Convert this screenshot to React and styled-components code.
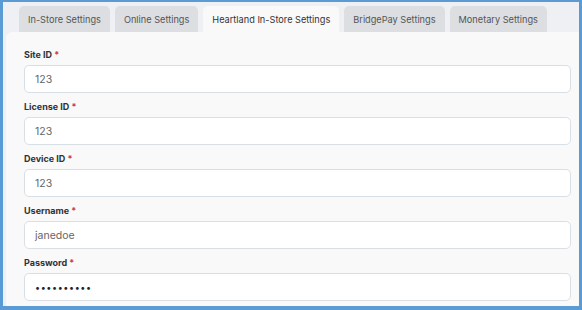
import styled, { createGlobalStyle } from "styled-components";

const GlobalStyle = createGlobalStyle`
  html, body {
    margin: 0;
    padding: 0;
    background: #ffffff;
  }
  * {
    box-sizing: border-box;
  }
`;

const tabs = [
  "In-Store Settings",
  "Online Settings",
  "Heartland In-Store Settings",
  "BridgePay Settings",
  "Monetary Settings",
];

const fields = [
  { label: "Site ID", value: "123" },
  { label: "License ID", value: "123" },
  { label: "Device ID", value: "123" },
  { label: "Username", value: "janedoe" },
  { label: "Password", value: "••••••••••", secret: true },
];

export default function App() {
  return (
    <>
      <GlobalStyle />
      <Frame>
        <TabBar>
          {tabs.map((t, i) => (
            <Tab key={t} $active={i === 2}>
              {t}
            </Tab>
          ))}
        </TabBar>
        <Card>
          {fields.map((f) => (
            <Field key={f.label}>
              <Label>
                {f.label} <Req>*</Req>
              </Label>
              <Input $secret={f.secret}>{f.value}</Input>
            </Field>
          ))}
          <Field>
            <Radio />
          </Field>
        </Card>
      </Frame>
    </>
  );
}

const Frame = styled.div`
  width: 582px;
  height: 310px;
  border: solid #5b9bd5;
  border-width: 2px 3px 4px 3px;
  background: #eef0f3;
  overflow: hidden;
  display: flex;
  flex-direction: column;
  font-family: Inter, "Noto Sans", sans-serif;
`;

const TabBar = styled.div`
  display: flex;
  gap: 5px;
  padding: 4px 0 0 16px;
`;

const Tab = styled.div`
  height: 26px;
  padding: 0 9px;
  display: flex;
  align-items: center;
  font-size: 9.2px;
  color: ${(p) => (p.$active ? "#333" : "#555")};
  background: ${(p) => (p.$active ? "#f9f9fa" : "#dcdee1")};
  border-radius: 5px 5px 0 0;
  white-space: nowrap;
`;

const Card = styled.div`
  flex: 1;
  margin-left: 3px;
  background: #f9f9fa;
  border-radius: 6px 0 0 0;
  padding: 18px 8px 0 18px;
  display: flex;
  flex-direction: column;
  gap: 9px;
`;

const Field = styled.div`
  display: flex;
  flex-direction: column;
  gap: 5px;
`;

const Label = styled.div`
  font-size: 9px;
  font-weight: 700;
  color: #2f3337;
  line-height: 10px;
`;

const Req = styled.span`
  color: #d03b3b;
`;

const Input = styled.div`
  height: 28px;
  background: #fff;
  border: 1px solid #d8e0e6;
  border-radius: 5px;
  padding: 0 10px;
  display: flex;
  align-items: center;
  font-size: ${(p) => (p.$secret ? "9px" : "10.5px")};
  color: ${(p) => (p.$secret ? "#222" : "#666")};
  letter-spacing: ${(p) => (p.$secret ? "0.6px" : "0")};
`;

const Radio = styled.div`
  width: 9px;
  height: 9px;
  margin-left: 2px;
  border-radius: 50%;
  border: 1px solid #888;
`;
